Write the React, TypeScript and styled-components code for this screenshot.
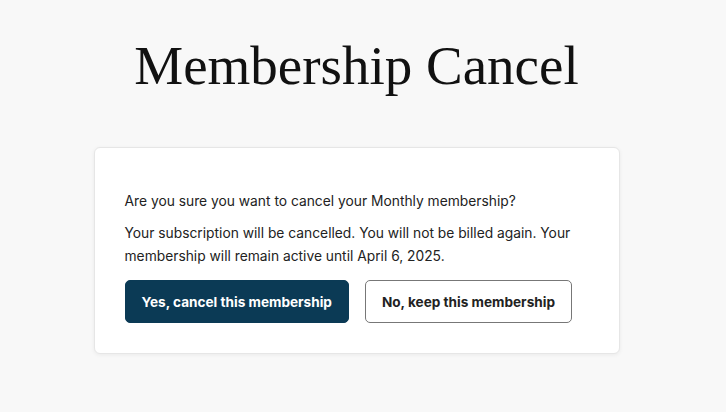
import React from "react"
import styled, { createGlobalStyle } from "styled-components"

const GlobalStyle = createGlobalStyle`
  html, body {
    margin: 0;
    padding: 0;
    background: #f8f8f8;
  }
`

const Page = styled.div`
  min-height: 412px;
  padding: 0 13px 0 0;
  display: flex;
  flex-direction: column;
  align-items: center;
  font-family: Inter, "Liberation Sans", sans-serif;
  color: #222;
`

const Title = styled.h1`
  margin: 31px 0 0 0;
  font-family: "Liberation Serif", serif;
  font-weight: normal;
  font-size: 55px;
  line-height: 70px;
  color: #111;
`

const Card = styled.div`
  box-sizing: border-box;
  width: 526px;
  margin-top: 46px;
  padding: 42px 30px 30px 30px;
  background: #fff;
  border: 1px solid #e6e6e6;
  border-radius: 6px;
  box-shadow: 0 1px 4px rgba(0, 0, 0, 0.06);
`

const Text = styled.p`
  margin: 0 0 9px 0;
  font-size: 13.8px;
  line-height: 23px;
`

const Actions = styled.div`
  display: flex;
  gap: 16px;
  margin-top: 12px;
`

const Button = styled.button<{ $primary?: boolean }>`
  height: 43px;
  padding: 0 16px;
  border-radius: 5px;
  font-family: Inter, "Liberation Sans", sans-serif;
  font-weight: 700;
  font-size: 13.6px;
  cursor: pointer;
  background: ${p => (p.$primary ? "#0b3a55" : "#fff")};
  color: ${p => (p.$primary ? "#fff" : "#222")};
  border: 1px solid ${p => (p.$primary ? "#0b3a55" : "#777")};
`

export default function App() {
  return (
    <>
      <GlobalStyle />
      <Page>
        <Title>Membership Cancel</Title>
        <Card>
          <Text>Are you sure you want to cancel your Monthly membership?</Text>
          <Text>
            Your subscription will be cancelled. You will not be billed again. Your
            membership will remain active until April 6, 2025.
          </Text>
          <Actions>
            <Button $primary>Yes, cancel this membership</Button>
            <Button>No, keep this membership</Button>
          </Actions>
        </Card>
      </Page>
    </>
  )
}
